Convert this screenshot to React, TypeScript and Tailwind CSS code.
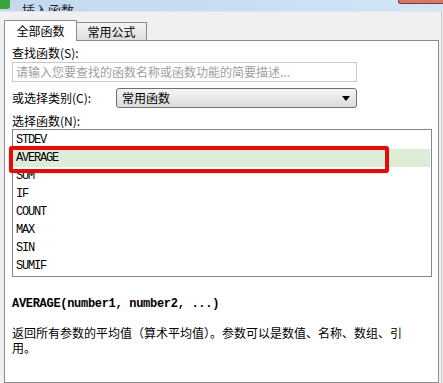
import React from "react";

const cjk = { fontFamily: '"SimSun","Noto Sans CJK SC","Liberation Sans",sans-serif' };
const mono = { fontFamily: '"Liberation Mono","DejaVu Sans Mono",monospace' };

const items = ["STDEV", "AVERAGE", "SUM", "IF", "COUNT", "MAX", "SIN", "SUMIF"];

export default function App() {
  return (
    <div className="w-[443px] h-[383px] overflow-hidden bg-[#f0f0f0] flex flex-col relative" style={cjk}>
      {/* title bar */}
      <div className="h-[12px] shrink-0 flex items-end bg-gradient-to-r from-[#c4d9ef] via-[#c9ddf2] to-[#d3e5f6] overflow-hidden relative border-b border-[#dde6ef]">
        <div className="w-[10px] h-[9px] bg-[#3aa63a] rounded-br-[3px] self-start" />
        <div className="ml-[12px] mb-[-7px] text-[13px] leading-[16px] text-[#222]">插入函数</div>
        <div className="absolute right-0 top-0 w-[45px] h-[4px] bg-[#d9786a] border-b border-l border-[#7a3a30] rounded-bl-[3px]" />
      </div>
      {/* tabs */}
      <div className="h-[28px] shrink-0 flex items-end pl-[4px]">
        <div className="w-[73px] h-[21px] bg-white border border-b-0 border-[#898c95] flex items-center justify-center text-[12px] text-black relative z-10 mb-[-1px] pb-[1px]">
          全部函数
        </div>
        <div className="w-[70px] h-[18px] bg-gradient-to-b from-[#f5f5f5] to-[#dedede] border border-l-0 border-b-0 border-[#898c95] flex items-center justify-center text-[12px] text-black">
          常用公式
        </div>
      </div>
      {/* panel */}
      <div className="ml-[4px] w-[435px] flex-1 bg-white border border-[#898c95] flex flex-col pl-[7px]">
        <div className="mt-[5px] h-[14px] text-[12px] leading-[14px] text-black">查找函数(S):</div>
        <div className="mt-[2px] w-[345px] h-[20px] border border-[#c8c8c8] flex items-center pl-[3px] text-[12px] text-[#a0a0a0]">
          请输入您要查找的函数名称或函数功能的简要描述...
        </div>
        <div className="mt-[6px] flex items-center h-[20px]">
          <div className="w-[104px] text-[12px] text-black">或选择类别(C):</div>
          <div className="w-[241px] h-[20px] rounded-[3px] border border-[#707070] bg-gradient-to-b from-[#f4f4f4] to-[#dcdcdc] flex items-center pl-[5px] text-[12px] text-black relative">
            常用函数
            <svg className="absolute right-[6px] top-[7px]" width="8" height="5" viewBox="0 0 8 5">
              <path d="M0 0 L8 0 L4 5 Z" fill="#000" />
            </svg>
          </div>
        </div>
        <div className="mt-[6px] h-[14px] text-[12px] leading-[14px] text-black">选择函数(N):</div>
        <div className="mt-[1px] w-[420px] h-[148px] border border-[#828790] pt-[1px] relative">
          {items.map((it, i) => (
            <div
              key={it}
              className={
                "h-[18px] flex items-center pl-[3px] text-[12px] tracking-[-1.2px] text-black " +
                (i === 1 ? "bg-[#deedd8] mr-[1px]" : "")
              }
              style={mono}
            >
              {it}
            </div>
          ))}
          <div className="absolute left-[-4px] top-[16px] w-[380px] h-[27px] border-[4px] border-[#e00d0d] rounded-[3px] shadow-[0_0_1px_#e00d0d]" />
        </div>
        <div className="mt-[21px] text-[12px] leading-[12px] font-bold text-black tracking-[-0.3px]" style={mono}>
          AVERAGE(number1, number2, ...)
        </div>
        <div className="mt-[15px] w-[405px] text-[12px] leading-[15px] text-black">
          返回所有参数的平均值（算术平均值）。参数可以是数值、名称、数组、引用。
        </div>
      </div>
      <div className="absolute right-[1px] top-[12px] bottom-0 w-px bg-[#c8c8c8]" />
    </div>
  );
}
